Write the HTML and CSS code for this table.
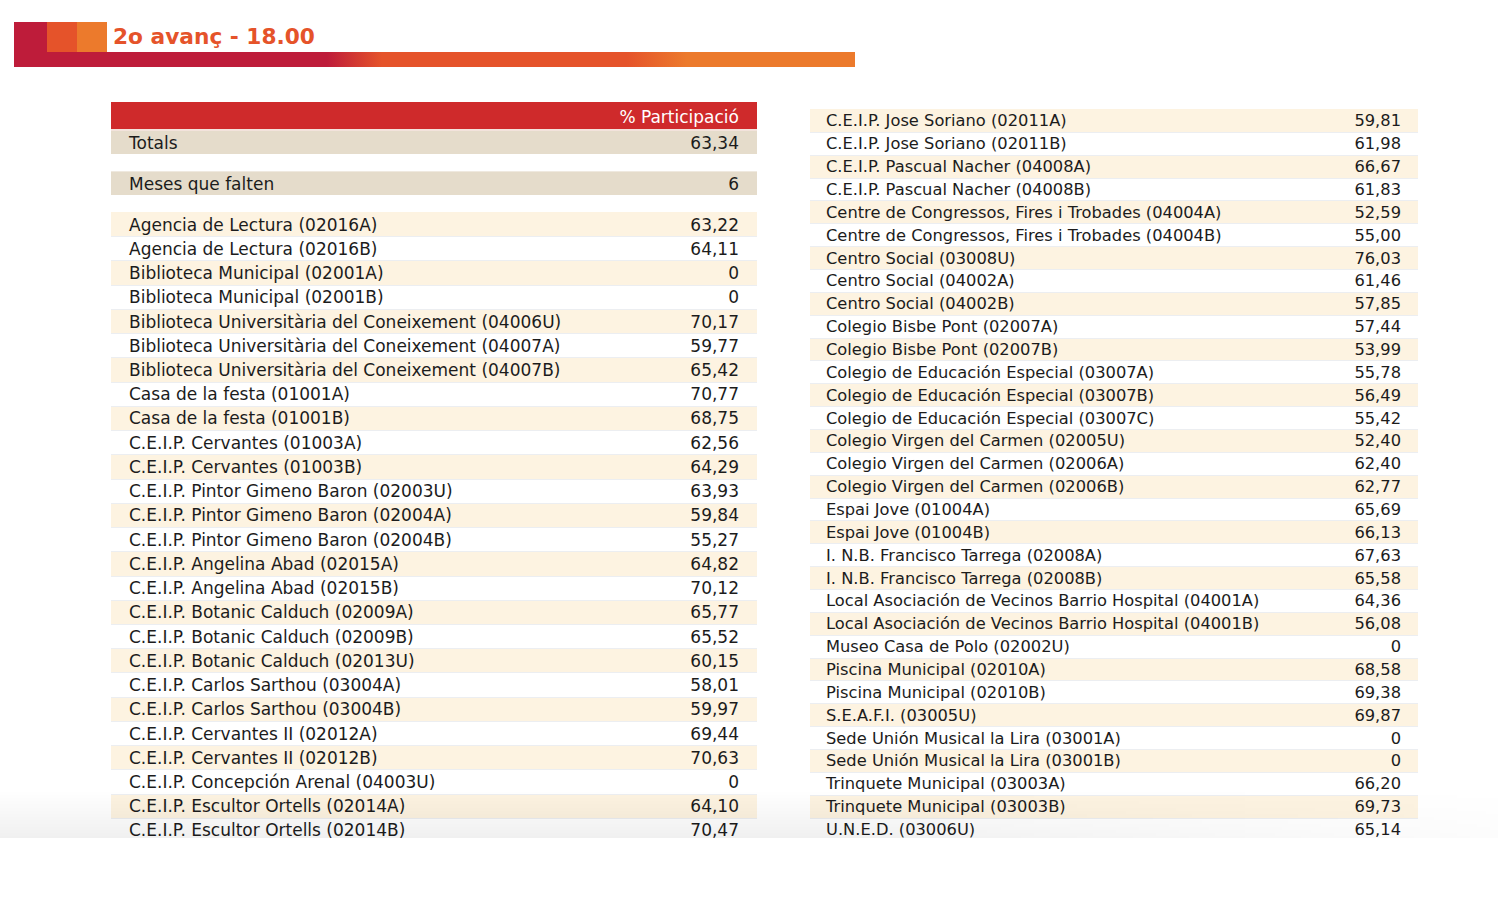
FILE: index.html
```html
<!DOCTYPE html>
<html lang="ca">
<head>
<meta charset="utf-8">
<title>2o avanç - 18.00</title>
<link rel="stylesheet" href="styles.css">
</head>
<body>
<div class="slide">
  <header class="banner">
    <div class="banner-red"></div>
    <div class="banner-main">
      <div class="banner-top">
        <span class="sq sq-1"></span>
        <span class="sq sq-2"></span>
        <h1 class="title">2o avanç - 18.00</h1>
      </div>
      <div class="banner-bar"></div>
    </div>
  </header>

  <main class="content">
    <section class="col col-left">
      <div class="thead">% Participació</div>
      <div class="summary summary-totals"><span>Totals</span><span>63,34</span></div>
      <div class="summary summary-meses"><span>Meses que falten</span><span>6</span></div>
      <div class="rows rows-left">
        <div class="row"><span>Agencia de Lectura (02016A)</span><span>63,22</span></div>
        <div class="row"><span>Agencia de Lectura (02016B)</span><span>64,11</span></div>
        <div class="row"><span>Biblioteca Municipal (02001A)</span><span>0</span></div>
        <div class="row"><span>Biblioteca Municipal (02001B)</span><span>0</span></div>
        <div class="row"><span>Biblioteca Universitària del Coneixement (04006U)</span><span>70,17</span></div>
        <div class="row"><span>Biblioteca Universitària del Coneixement (04007A)</span><span>59,77</span></div>
        <div class="row"><span>Biblioteca Universitària del Coneixement (04007B)</span><span>65,42</span></div>
        <div class="row"><span>Casa de la festa (01001A)</span><span>70,77</span></div>
        <div class="row"><span>Casa de la festa (01001B)</span><span>68,75</span></div>
        <div class="row"><span>C.E.I.P. Cervantes (01003A)</span><span>62,56</span></div>
        <div class="row"><span>C.E.I.P. Cervantes (01003B)</span><span>64,29</span></div>
        <div class="row"><span>C.E.I.P. Pintor Gimeno Baron (02003U)</span><span>63,93</span></div>
        <div class="row"><span>C.E.I.P. Pintor Gimeno Baron (02004A)</span><span>59,84</span></div>
        <div class="row"><span>C.E.I.P. Pintor Gimeno Baron (02004B)</span><span>55,27</span></div>
        <div class="row"><span>C.E.I.P. Angelina Abad (02015A)</span><span>64,82</span></div>
        <div class="row"><span>C.E.I.P. Angelina Abad (02015B)</span><span>70,12</span></div>
        <div class="row"><span>C.E.I.P. Botanic Calduch (02009A)</span><span>65,77</span></div>
        <div class="row"><span>C.E.I.P. Botanic Calduch (02009B)</span><span>65,52</span></div>
        <div class="row"><span>C.E.I.P. Botanic Calduch (02013U)</span><span>60,15</span></div>
        <div class="row"><span>C.E.I.P. Carlos Sarthou (03004A)</span><span>58,01</span></div>
        <div class="row"><span>C.E.I.P. Carlos Sarthou (03004B)</span><span>59,97</span></div>
        <div class="row"><span>C.E.I.P. Cervantes II (02012A)</span><span>69,44</span></div>
        <div class="row"><span>C.E.I.P. Cervantes II (02012B)</span><span>70,63</span></div>
        <div class="row"><span>C.E.I.P. Concepción Arenal (04003U)</span><span>0</span></div>
        <div class="row"><span>C.E.I.P. Escultor Ortells (02014A)</span><span>64,10</span></div>
        <div class="row"><span>C.E.I.P. Escultor Ortells (02014B)</span><span>70,47</span></div>
      </div>
    </section>

    <section class="col col-right">
      <div class="rows rows-right">
        <div class="row"><span>C.E.I.P. Jose Soriano (02011A)</span><span>59,81</span></div>
        <div class="row"><span>C.E.I.P. Jose Soriano (02011B)</span><span>61,98</span></div>
        <div class="row"><span>C.E.I.P. Pascual Nacher (04008A)</span><span>66,67</span></div>
        <div class="row"><span>C.E.I.P. Pascual Nacher (04008B)</span><span>61,83</span></div>
        <div class="row"><span>Centre de Congressos, Fires i Trobades (04004A)</span><span>52,59</span></div>
        <div class="row"><span>Centre de Congressos, Fires i Trobades (04004B)</span><span>55,00</span></div>
        <div class="row"><span>Centro Social (03008U)</span><span>76,03</span></div>
        <div class="row"><span>Centro Social (04002A)</span><span>61,46</span></div>
        <div class="row"><span>Centro Social (04002B)</span><span>57,85</span></div>
        <div class="row"><span>Colegio Bisbe Pont (02007A)</span><span>57,44</span></div>
        <div class="row"><span>Colegio Bisbe Pont (02007B)</span><span>53,99</span></div>
        <div class="row"><span>Colegio de Educación Especial (03007A)</span><span>55,78</span></div>
        <div class="row"><span>Colegio de Educación Especial (03007B)</span><span>56,49</span></div>
        <div class="row"><span>Colegio de Educación Especial (03007C)</span><span>55,42</span></div>
        <div class="row"><span>Colegio Virgen del Carmen (02005U)</span><span>52,40</span></div>
        <div class="row"><span>Colegio Virgen del Carmen (02006A)</span><span>62,40</span></div>
        <div class="row"><span>Colegio Virgen del Carmen (02006B)</span><span>62,77</span></div>
        <div class="row"><span>Espai Jove (01004A)</span><span>65,69</span></div>
        <div class="row"><span>Espai Jove (01004B)</span><span>66,13</span></div>
        <div class="row"><span>I. N.B. Francisco Tarrega (02008A)</span><span>67,63</span></div>
        <div class="row"><span>I. N.B. Francisco Tarrega (02008B)</span><span>65,58</span></div>
        <div class="row"><span>Local Asociación de Vecinos Barrio Hospital (04001A)</span><span>64,36</span></div>
        <div class="row"><span>Local Asociación de Vecinos Barrio Hospital (04001B)</span><span>56,08</span></div>
        <div class="row"><span>Museo Casa de Polo (02002U)</span><span>0</span></div>
        <div class="row"><span>Piscina Municipal (02010A)</span><span>68,58</span></div>
        <div class="row"><span>Piscina Municipal (02010B)</span><span>69,38</span></div>
        <div class="row"><span>S.E.A.F.I. (03005U)</span><span>69,87</span></div>
        <div class="row"><span>Sede Unión Musical la Lira (03001A)</span><span>0</span></div>
        <div class="row"><span>Sede Unión Musical la Lira (03001B)</span><span>0</span></div>
        <div class="row"><span>Trinquete Municipal (03003A)</span><span>66,20</span></div>
        <div class="row"><span>Trinquete Municipal (03003B)</span><span>69,73</span></div>
        <div class="row"><span>U.N.E.D. (03006U)</span><span>65,14</span></div>
      </div>
    </section>
  </main>
  <div class="shade"></div>
</div>
</body>
</html>
```

FILE: styles.css
```css
* { box-sizing: border-box; }

html, body {
  margin: 0;
  padding: 0;
  background: #ffffff;
}

body {
  font-family: "DejaVu Sans", Verdana, sans-serif;
  color: #1c1c1c;
}

.slide {
  position: relative;
  width: 1498px;
  height: 838px;
  overflow: hidden;
  background: #ffffff;
  padding-top: 22px;
}

/* ---------- banner ---------- */
.banner {
  display: flex;
  margin-left: 14px;
  width: 841px;
  height: 45px;
}

.banner-red {
  width: 33px;
  height: 45px;
  background: #be1c3a;
}

.banner-main {
  flex: 1;
  display: flex;
  flex-direction: column;
}

.banner-top {
  display: flex;
  align-items: center;
  height: 30px;
}

.sq {
  width: 30px;
  height: 30px;
}

.sq-1 { background: #e5532a; }
.sq-2 { background: #ec7a2c; }

.title {
  margin: 0 0 0 6px;
  font-family: "DejaVu Sans", Verdana, sans-serif;
  font-weight: bold;
  font-size: 21.7px;
  line-height: 30px;
  color: #e5532a;
  letter-spacing: 0;
}

.banner-bar {
  height: 15px;
  background: linear-gradient(to right,
    #be1c3a 0px, #be1c3a 280px,
    #e5532a 335px, #e5532a 580px,
    #ec7a2c 640px, #ec7a2c 100%);
}

/* ---------- content ---------- */
.content {
  display: flex;
  align-items: flex-start;
  gap: 53px;
  margin-left: 111px;
}

.col-left {
  width: 646px;
  margin-top: 35px;
  font-size: 17px;
}

.col-right {
  width: 608px;
  margin-top: 42px;
  font-size: 16.3px;
}

.thead {
  background: #cf2a2b;
  color: #ffffff;
  text-align: right;
  padding-right: 18px;
  line-height: 30px;
  border-bottom: 2px solid #f3e3dc;
  height: 29px;
}

.summary {
  display: flex;
  justify-content: space-between;
  align-items: center;
  background: #e5dccb;
  padding: 0 18px;
}

.summary-totals {
  height: 23px;
}

.summary-meses {
  height: 24px;
  margin-top: 17px;
  border-top: 1px solid #efe9df;
}

.rows-left {
  margin-top: 17px;
}

.row {
  display: flex;
  justify-content: space-between;
  align-items: center;
  white-space: nowrap;
  border-top: 1px solid #eceef1;
}

.row:nth-child(odd) {
  background: #fdf3e1;
}

.rows-left .row {
  height: 24.24px;
  padding: 0 18px;
}

.rows-right .row {
  height: 22.87px;
  padding: 0 17px 0 16px;
}

.rows .row:first-child {
  border-top-color: transparent;
}

/* soft gray shading at the bottom edge of the slide */
.shade {
  position: absolute;
  left: 0;
  right: 0;
  bottom: 0;
  height: 48px;
  pointer-events: none;
  background: linear-gradient(to bottom, rgba(0, 0, 0, 0), rgba(0, 0, 0, 0.06));
  -webkit-mask-image: linear-gradient(to right, #000 0%, #000 55%, rgba(0,0,0,0.2) 100%);
  mask-image: linear-gradient(to right, #000 0%, #000 55%, rgba(0,0,0,0.2) 100%);
}
```
